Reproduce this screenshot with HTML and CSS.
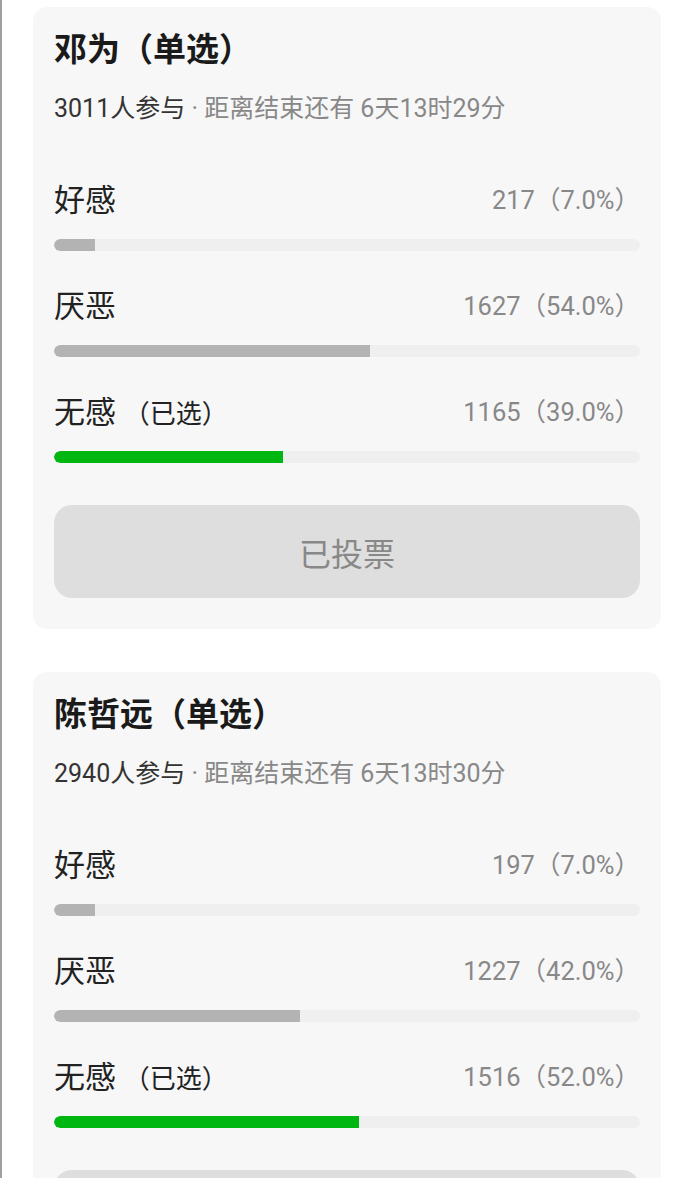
FILE: index.html
```html
<!DOCTYPE html>
<html lang="zh-CN">
<head>
    <meta charset="UTF-8">
    <meta name="viewport" content="width=device-width, initial-scale=1.0">
    <title>投票</title>
    <link rel="stylesheet" href="styles.css">
</head>
<body>
    <!-- 投票卡片 1 -->
    <div class="poll-card">
        <h2 class="poll-title">邓为（单选）</h2>
        <p class="poll-meta"><span class="count">3011人参与</span> · 距离结束还有 6天13时29分</p>
        <div class="options">
            <div class="option">
                <div class="option-head">
                    <span class="label">好感</span>
                    <span class="stat">217（7.0%）</span>
                </div>
                <div class="bar"><div class="fill" style="width: 7%"></div></div>
            </div>
            <div class="option">
                <div class="option-head">
                    <span class="label">厌恶</span>
                    <span class="stat">1627（54.0%）</span>
                </div>
                <div class="bar"><div class="fill" style="width: 54%"></div></div>
            </div>
            <div class="option">
                <div class="option-head">
                    <span class="label">无感 <small>（已选）</small></span>
                    <span class="stat">1165（39.0%）</span>
                </div>
                <div class="bar"><div class="fill chosen" style="width: 39%"></div></div>
            </div>
        </div>
        <button class="vote-btn" disabled>已投票</button>
    </div>

    <!-- 投票卡片 2 -->
    <div class="poll-card">
        <h2 class="poll-title">陈哲远（单选）</h2>
        <p class="poll-meta"><span class="count">2940人参与</span> · 距离结束还有 6天13时30分</p>
        <div class="options">
            <div class="option">
                <div class="option-head">
                    <span class="label">好感</span>
                    <span class="stat">197（7.0%）</span>
                </div>
                <div class="bar"><div class="fill" style="width: 7%"></div></div>
            </div>
            <div class="option">
                <div class="option-head">
                    <span class="label">厌恶</span>
                    <span class="stat">1227（42.0%）</span>
                </div>
                <div class="bar"><div class="fill" style="width: 42%"></div></div>
            </div>
            <div class="option">
                <div class="option-head">
                    <span class="label">无感 <small>（已选）</small></span>
                    <span class="stat">1516（52.0%）</span>
                </div>
                <div class="bar"><div class="fill chosen" style="width: 52%"></div></div>
            </div>
        </div>
        <button class="vote-btn" disabled>已投票</button>
    </div>
</body>
</html>
```

FILE: styles.css
```css
body {
    font-family: Roboto, "Noto Sans CJK SC", sans-serif;
    margin: 0;
    padding: 7px 29px 0 31px;
    border-left: 2px solid #a0a0a0;
    min-height: 1178px;
    box-sizing: border-box;
    background-color: #fff;
    color: #222;
}
.poll-card {
    background-color: #f7f7f7;
    border-radius: 14px;
    padding: 24px 21px 31px;
    margin-bottom: 43px;
}
.poll-title {
    margin: 0;
    font-size: 33px;
    line-height: 38px;
    font-weight: bold;
    color: #1a1a1a;
}
.poll-meta {
    margin: 25px 0 0;
    font-size: 25px;
    line-height: 30px;
    color: #888;
}
.poll-meta .count {
    color: #333;
}
.options {
    margin-top: 53px;
    display: flex;
    flex-direction: column;
    gap: 32px;
}
.option-head {
    display: flex;
    justify-content: space-between;
    align-items: center;
    height: 40px;
}
.label {
    font-size: 31px;
    color: #222;
}
.label small {
    font-size: 26px;
}
.stat {
    font-size: 25.5px;
    color: #888;
}
.bar {
    margin-top: 22px;
    height: 12px;
    border-radius: 6px;
    background-color: #efefef;
    overflow: hidden;
}
.fill {
    height: 100%;
    background-color: #b3b3b3;
    border-radius: 6px 0 0 6px;
}
.fill.chosen {
    background-color: #00b712;
}
.vote-btn {
    display: block;
    width: 100%;
    height: 93px;
    margin-top: 42px;
    border: none;
    border-radius: 18px;
    background-color: #dedede;
    color: #888;
    font-family: inherit;
    font-size: 32px;
}
```
